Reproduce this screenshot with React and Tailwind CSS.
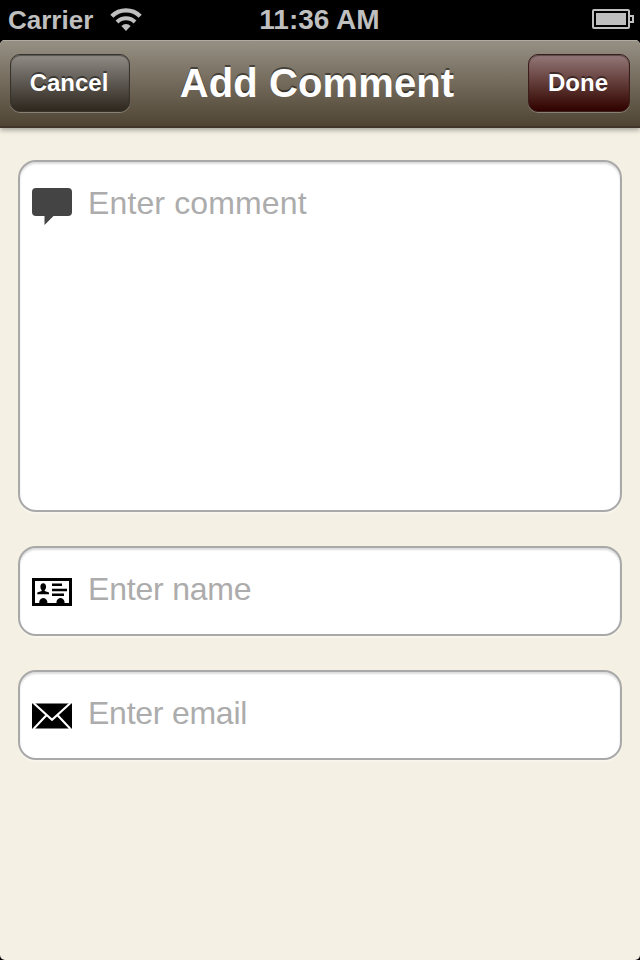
import React from "react";

function WifiIcon() {
  return (
    <svg className="h-6 w-8" viewBox="0 0 32 24" fill="none" stroke="#bfbfbf" aria-hidden="true">
      <path d="M1.800 8.200a20.200 20.200 0 0 1 28.400 0" strokeWidth="4.400" />
      <path d="M7 14a12.700 12.700 0 0 1 18 0" strokeWidth="4" />
      <path d="M16 23 11.400 18a6.500 6.500 0 0 1 9.200 0z" fill="#bfbfbf" stroke="none" />
    </svg>
  );
}

function BatteryIcon() {
  return (
    <svg className="h-5 w-[42px]" viewBox="0 0 42 20" fill="none" aria-hidden="true">
      <rect x="1" y="1" width="36" height="18" rx="1" stroke="#bfbfbf" strokeWidth="2" />
      <rect x="4" y="4" width="30" height="12" fill="#bfbfbf" />
      <path d="M38 7h3v6h-3" stroke="#bfbfbf" strokeWidth="2" />
    </svg>
  );
}

function CommentIcon() {
  return (
    <svg className="h-[38px] w-10" viewBox="0 0 40 38" aria-hidden="true">
      <path
        d="M4 0h32a4 4 0 0 1 4 4v20a4 4 0 0 1-4 4H21.500L12.500 37V28H4a4 4 0 0 1-4-4V4a4 4 0 0 1 4-4z"
        fill="#444"
      />
    </svg>
  );
}

function CardIcon() {
  return (
    <svg className="h-7 w-10" viewBox="0 0 40 28" aria-hidden="true">
      <rect x="1.500" y="1.500" width="37" height="25" fill="none" stroke="#000" strokeWidth="3" />
      <ellipse cx="11.200" cy="8.700" rx="2.800" ry="3.500" />
      <path d="M9.700 11h3v2l4.300 1.500V16.200H5.300V14.500l4.400-1.500z" />
      <path d="M20 5.500h10v2.500H20zM20 10.700h15v2.500H20zM20 15.500h12v2.500H20z" />
      <path d="M7.300 26v-2.500c1-4.700 7-4.700 8 0V26zM24.500 26v-2.500c1-4.700 7-4.700 8 0V26z" />
    </svg>
  );
}

function MailIcon() {
  return (
    <svg className="h-[26px] w-10" viewBox="0 0 40 26" aria-hidden="true">
      <rect x="0" y="0.500" width="40" height="25" />
      <path
        d="M1.500 0 20 16.800 38.500 0M1.500 26 14.200 12.500M38.500 26 25.800 12.500"
        fill="none"
        stroke="#fff"
        strokeWidth="2.100"
      />
    </svg>
  );
}

function Field({ children, label, className, labelClass }) {
  return (
    <div
      className={
        "flex w-full items-start rounded-[18px] border-2 border-[#a9a9a9] bg-white pl-3 shadow-[inset_0_2px_2px_rgba(0,0,0,0.14),0_2px_0_rgba(255,255,255,0.35)] " +
        className
      }
    >
      {children}
      <span className={"ml-4 text-[32px] leading-[34px] text-[#acacac] " + labelClass}>{label}</span>
    </div>
  );
}

const buttonClass =
  "flex h-[58px] items-center justify-center rounded-[10px] border pr-0.5 text-2xl font-bold text-white [text-shadow:0_-2px_0_rgba(0,0,0,0.45)] ";

export default function App() {
  return (
    <div className="h-[960px] w-[640px] overflow-hidden bg-black font-['Liberation_Sans',Arial,sans-serif]">
      <div className="grid h-10 grid-cols-3 items-center bg-black pr-1.5 pl-2 text-[#bfbfbf]">
        <div className="flex items-center">
          <span className="text-[26px] leading-10 font-bold">Carrier</span>
          <span className="ml-[17px] flex">
            <WifiIcon />
          </span>
        </div>
        <span className="pr-[3px] text-center text-[28px] leading-10 font-bold">11:36 AM</span>
        <div className="flex justify-end pb-0.5">
          <BatteryIcon />
        </div>
      </div>

      <div className="flex h-[920px] flex-col overflow-hidden rounded-t-[5px] rounded-b-[5px] bg-[#f4f0e3]">
        <header className="flex h-[88px] shrink-0 items-start border-b-2 border-[#40352a] bg-linear-to-b from-[#979185] to-[#504534] px-2.5 pt-3.5 shadow-[inset_0_1px_0_rgba(255,255,255,0.25),0_2px_5px_rgba(0,0,0,0.35)]">
          <button
            className={
              buttonClass +
              "w-[120px] border-[#38332d] bg-linear-to-b from-[#928e89] to-[#2c261d] bg-origin-border shadow-[inset_0_1px_1px_rgba(0,0,0,0.4),0_1px_0_rgba(255,255,255,0.28)]"
            }
          >
            Cancel
          </button>
          <h1 className="flex-1 pr-[24px] text-center text-[40px] leading-[58px] font-bold tracking-[0.1px] whitespace-nowrap text-white [text-shadow:0_-2px_0_rgba(0,0,0,0.45)]">
            Add Comment
          </h1>
          <button
            className={
              buttonClass +
              "w-[102px] border-[#3b1d1a] bg-linear-to-b from-[#957b7b] to-[#2d0000] bg-origin-border shadow-[inset_0_1px_1px_rgba(0,0,0,0.4),0_1px_0_rgba(255,255,255,0.28)]"
            }
          >
            Done
          </button>
        </header>

        <main className="flex flex-col px-[18px] pt-8">
          <Field label="Enter comment" labelClass="tracking-[0.13px]" className="h-[352px] pt-6">
            <span className="pt-0.5">
              <CommentIcon />
            </span>
          </Field>
          <Field label="Enter name" labelClass="tracking-[-0.2px]" className="mt-[34px] h-[90px] pt-6">
            <span className="pt-1.5">
              <CardIcon />
            </span>
          </Field>
          <Field label="Enter email" labelClass="tracking-[-0.25px]" className="mt-[34px] h-[90px] pt-6">
            <span className="pt-[7px]">
              <MailIcon />
            </span>
          </Field>
        </main>
      </div>
    </div>
  );
}
